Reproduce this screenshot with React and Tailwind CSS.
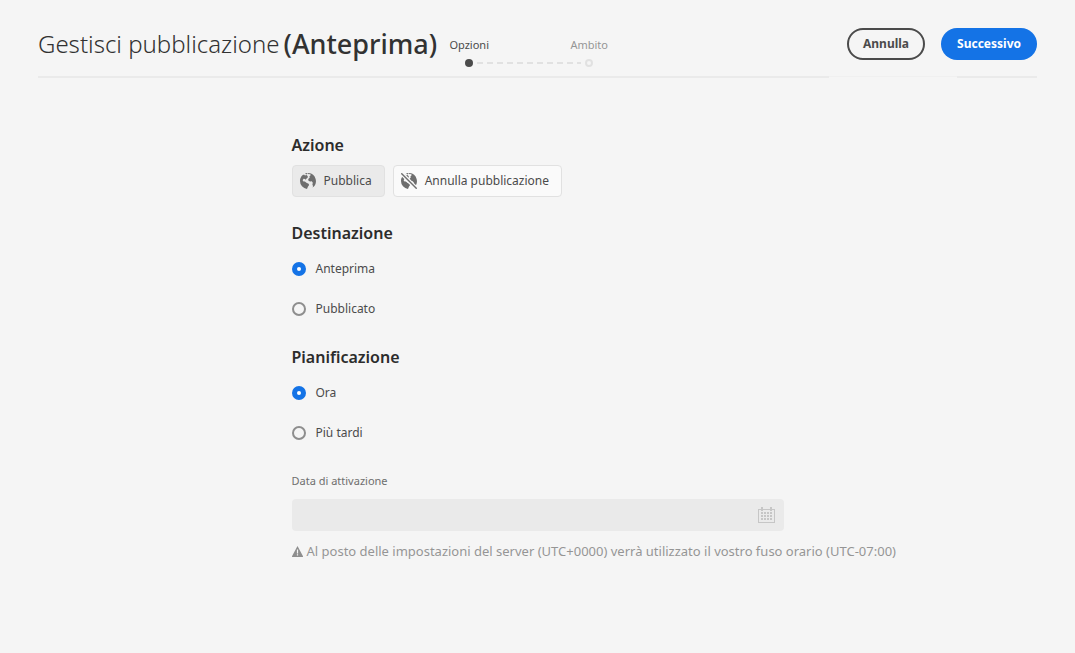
import { useState } from "react";

function GlobeLand() {
  return (
    <>
      <path
        fill="currentColor"
        d="M1.300 3.600A8 8 0 0 0 0 8a8 8 0 0 0 7 7.940l.900-2.300 1.200-1.700-.5-1.300-2.200-.8-1.500-1.300-1.400-.1-.9-1.200 1-1.400 1.600.2.500 1 .6-1.400 1.300-1 .2-1.300L6.500 2l-1.600.4-.5-.7-1.200.1a8 8 0 0 0-1.900 1.800Z"
      />
      <path
        fill="currentColor"
        d="M7.200.05 8.900 1.300l1.300-.3.400 1.200-1.200 1.400.3 1.200-1.500 1.300.3 1.600 1.600.9 1.700-.3 1 1.500-.4 1.700.7 1.700-.7 1.400A8 8 0 0 0 8.500.02L7.200.05Z"
      />
      <path fill="currentColor" d="M5 .6 6.800.1l.7.700-1.300.6L5 .6Z" />
    </>
  );
}

function GlobeIcon() {
  return (
    <svg className="size-4 shrink-0 text-[#6e6e6e]" viewBox="0 0 16 16" aria-hidden="true">
      <GlobeLand />
    </svg>
  );
}

function GlobeStrikeIcon() {
  return (
    <svg className="size-4 shrink-0 text-[#6e6e6e]" viewBox="0 0 16 16" aria-hidden="true">
      <GlobeLand />
      <path stroke="#fafafa" strokeWidth="4" d="m0 0 16 16" />
      <path stroke="currentColor" strokeWidth="1.400" d="m.3.300 15.400 15.400" />
    </svg>
  );
}

function CalendarIcon() {
  return (
    <svg className="h-[17px] w-[17px]" viewBox="0 0 17 17" aria-hidden="true" shapeRendering="crispEdges">
      <path fill="none" stroke="currentColor" d="M.5 2.500h16v13H.5z" />
      <path fill="currentColor" d="M3 0h2v4H3zM12 0h2v4h-2z" />
      {[5, 8, 11].map((y) =>
        [3, 6, 9, 12].map((x) => (
          <rect key={`${x}-${y}`} x={x} y={y} width="2" height="2" fill="currentColor" />
        ))
      )}
    </svg>
  );
}

function WarningIcon() {
  return (
    <svg className="h-[11px] w-[11px] shrink-0" viewBox="0 0 11 11" aria-hidden="true">
      <path fill="#8e8e8e" d="M5.500 0 11 10.200a.5.5 0 0 1-.4.800H.4a.5.5 0 0 1-.4-.8L5.500 0Z" />
      <path fill="#f5f5f5" d="M4.900 3.500h1.200v4H4.900zM4.900 8.300h1.200v1.300H4.900z" />
    </svg>
  );
}

function RadioGroup({ title, name, options }) {
  return (
    <fieldset>
      <legend className="text-base leading-6 font-semibold text-[#2c2c2c]">{title}</legend>
      <div className="mt-1 flex flex-col">
        {options.map((option, index) => (
          <label key={option} className="flex h-10 items-center gap-[10px] text-xs text-[#4b4b4b]">
            <input
              type="radio"
              name={name}
              defaultChecked={index === 0}
              className="size-[14px] appearance-none rounded-full border-2 border-[#8e8e8e] bg-[#f5f5f5] checked:border-[5px] checked:border-[#1473e6] checked:bg-white"
            />
            {option}
          </label>
        ))}
      </div>
    </fieldset>
  );
}

export default function App() {
  const [action, setAction] = useState("publish");
  const pressed = "border-[#e1e1e1] bg-[#eaeaea]";
  const idle = "border-[#e1e1e1] bg-[#fafafa]";

  return (
    <div className="min-h-screen bg-[#f5f5f5] px-[38px] font-['Noto_Sans','Open_Sans',sans-serif] text-[#4b4b4b]">
      <header>
        <div className="flex h-[76px] items-start pt-7">
          <h1 className="flex items-center gap-1 leading-8 whitespace-nowrap">
            <span className="text-2xl leading-8 font-light text-[#323232]">Gestisci pubblicazione</span>
            <span className="text-[27px] font-medium text-[#323232]">(Anteprima)</span>
          </h1>
          <ol className="flex pt-2 text-[11px] leading-[18px]">
            <li className="w-16 text-center">
              Opzioni
              <span className="mx-auto mt-[5px] block size-2 rounded-full bg-[#4b4b4b]" />
            </li>
            <li aria-hidden="true" className="-mx-6 w-[104px] pt-[26px]">
              <svg className="h-[2px] w-full" preserveAspectRatio="none">
                <path d="M0 1h104" stroke="#e1e1e1" strokeWidth="2" strokeDasharray="6 4" />
              </svg>
            </li>
            <li className="w-16 text-center text-[#959595]">
              Ambito
              <span className="mx-auto mt-[5px] block size-2 rounded-full border-2 border-[#e1e1e1]" />
            </li>
          </ol>
          <div className="ml-auto flex gap-4 text-xs font-bold">
            <button type="button" className="h-8 rounded-full border-2 border-[#4b4b4b] px-[14px]">
              Annulla
            </button>
            <button type="button" className="h-8 rounded-full bg-[#1473e6] px-4 text-white">
              Successivo
            </button>
          </div>
        </div>
        <div className="flex h-[2px]">
          <span className="grow bg-[#eaeaea]" />
          <span className="w-32 border-t border-[#f0f0f0]" />
          <span className="w-20 bg-[#eaeaea]" />
        </div>
      </header>

      <main className="mx-auto w-full max-w-[492px] pt-[55px] pb-20">
        <section>
          <h2 className="text-base leading-6 font-semibold text-[#2c2c2c]">Azione</h2>
          <div className="mt-2 flex gap-2 text-xs">
            <button
              type="button"
              aria-pressed={action === "publish"}
              onClick={() => setAction("publish")}
              className={`flex h-8 items-center gap-2 rounded border pr-3 pl-[7px] ${action === "publish" ? pressed : idle}`}
            >
              <GlobeIcon />
              Pubblica
            </button>
            <button
              type="button"
              aria-pressed={action === "unpublish"}
              onClick={() => setAction("unpublish")}
              className={`flex h-8 items-center gap-2 rounded border pr-3 pl-[7px] ${action === "unpublish" ? pressed : idle}`}
            >
              <GlobeStrikeIcon />
              Annulla pubblicazione
            </button>
          </div>
        </section>

        <div className="mt-6 flex flex-col gap-4">
          <RadioGroup title="Destinazione" name="destination" options={["Anteprima", "Pubblicato"]} />
          <RadioGroup title="Pianificazione" name="schedule" options={["Ora", "Più tardi"]} />
        </div>

        <div className="mt-5">
          <label htmlFor="activation" className="block text-[11px] leading-4 text-[#6e6e6e]">
            Data di attivazione
          </label>
          <div className="mt-[10px] flex h-8 items-center rounded bg-[#eaeaea] pr-[9px]">
            <input id="activation" type="text" disabled className="h-full min-w-0 grow bg-transparent px-3 text-[13px]" />
            <button type="button" disabled aria-label="Calendario" className="text-[#c6c6c6]">
              <CalendarIcon />
            </button>
          </div>
          <p className="mt-[10px] flex items-center gap-1 text-[13px] leading-5 whitespace-nowrap text-[#959595]">
            <WarningIcon />
            Al posto delle impostazioni del server (UTC+0000) verrà utilizzato il vostro fuso orario (UTC-07:00)
          </p>
        </div>
      </main>
    </div>
  );
}
